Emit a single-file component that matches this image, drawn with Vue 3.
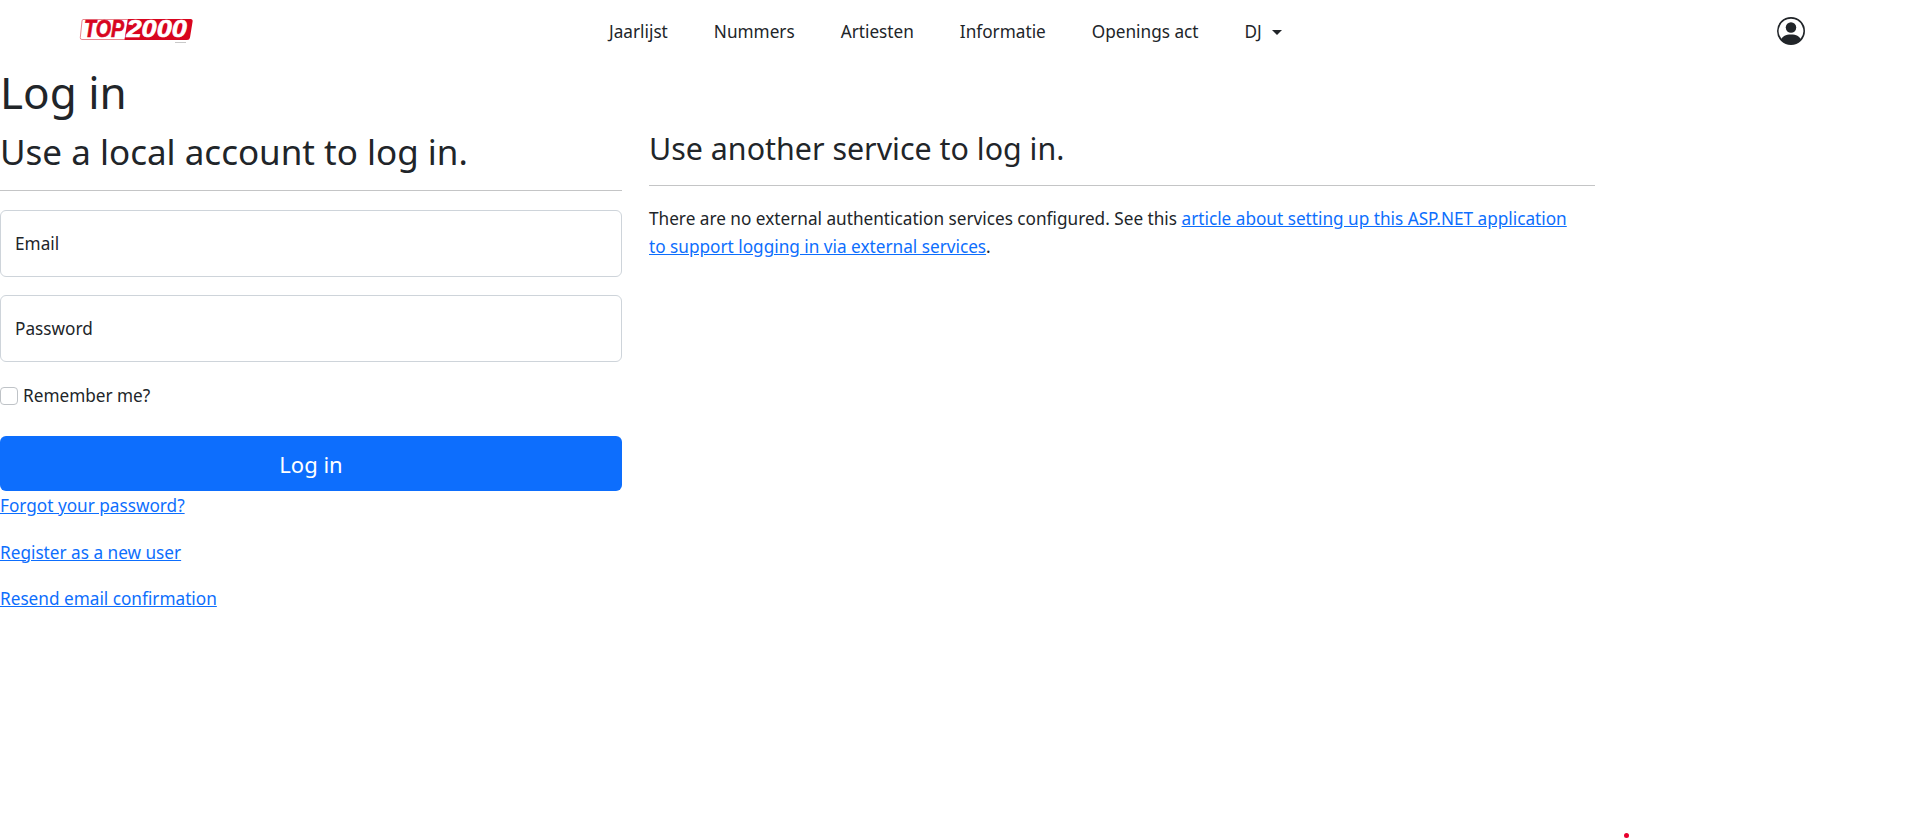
<script setup>
const links = ['Jaarlijst', 'Nummers', 'Artiesten', 'Informatie', 'Openings act']
</script>

<template>
  <div class="page">
    <header class="navbar">
      <a class="logo" href="#" aria-label="Top 2000">
        <svg width="114" height="31" viewBox="0 -3 114 31">
          <path d="M4 1.500H49L46 21.500H3Q1 21.500 1.300 19.500L3 3Q3.200 1.500 4 1.500Z" fill="#fff" stroke="#e9858f" stroke-width="1"/>
          <path d="M49 1H111.500Q114 1 113.600 3.500L111 19.500Q110.600 22 108 22H45.500Z" fill="#d8051f"/>
          <text x="5" y="19" class="logo-top" textLength="40" lengthAdjust="spacingAndGlyphs">TOP</text>
          <text x="47.500" y="19" class="logo-num" textLength="60.500" lengthAdjust="spacingAndGlyphs">2000</text>
          <rect x="96" y="24" width="11" height="1" fill="#c9c9c9"/>
        </svg>
      </a>
      <nav class="nav">
        <a v-for="l in links" :key="l" href="#" class="nav-link">{{ l }}</a>
        <a href="#" class="nav-link dropdown">DJ<span class="caret"></span></a>
      </nav>
      <svg class="user" width="28" height="28" viewBox="0 0 16 16" fill="#212529">
        <path d="M11 6a3 3 0 1 1-6 0 3 3 0 0 1 6 0"/>
        <path fill-rule="evenodd" d="M0 8a8 8 0 1 1 16 0A8 8 0 0 1 0 8m8-7a7 7 0 0 0-5.468 11.370C3.242 11.226 4.805 10 8 10s4.757 1.225 5.468 2.370A7 7 0 0 0 8 1"/>
      </svg>
    </header>

    <main class="main">
      <h1>Log in</h1>
      <div class="columns">
        <section class="left">
          <h2>Use a local account to log in.</h2>
          <hr class="rule-left" />
          <div class="field">Email</div>
          <div class="field">Password</div>
          <label class="remember"><span class="check"></span>Remember me?</label>
          <button class="btn" type="button">Log in</button>
          <p class="forgot"><a href="#">Forgot your password?</a></p>
          <p><a href="#">Register as a new user</a></p>
          <p><a href="#">Resend email confirmation</a></p>
        </section>
        <section class="right">
          <h3>Use another service to log in.</h3>
          <hr class="rule-right" />
          <p class="info">There are no external authentication services configured. See this <a href="#">article about setting up this ASP.NET application to support logging in via external services</a>.</p>
        </section>
      </div>
    </main>
    <span class="dot"></span>
  </div>
</template>

<style>
html, body { margin: 0; background: #fff; }
</style>

<style scoped>
.page {
  position: relative;
  height: 839px;
  overflow: hidden;
  font-family: "Noto Sans", "Open Sans", sans-serif;
  font-size: 17.200px;
  line-height: 24px;
  color: #212529;
}
.navbar {
  display: flex;
  align-items: center;
  height: 62px;
  padding-left: 79px;
  box-sizing: border-box;
}
.logo { display: block; width: 114px; height: 31px; margin-top: -2px; }
.logo-top, .logo-num {
  font-family: "Liberation Sans", sans-serif;
  font-weight: 700;
  font-style: italic;
  font-size: 23px;
  stroke-width: 0.6px;
}
.logo-top { fill: #d8051f; stroke: #d8051f; }
.logo-num { fill: #fff; stroke: #fff; }
.nav { display: flex; margin-left: 393px; margin-top: 2px; }
.nav-link {
  color: #212529;
  text-decoration: none;
  padding: 0 23px;
}
.caret {
  display: inline-block;
  margin-left: 10px;
  vertical-align: 3px;
  border-top: 5.500px solid #212529;
  border-left: 5.500px solid transparent;
  border-right: 5.500px solid transparent;
}
.user { margin-left: auto; margin-right: 101px; }
h1 { margin: 0; font-size: 44px; font-weight: 400; line-height: 60px; height: 48px; }
h2 { margin: 0; font-size: 35px; font-weight: 400; line-height: 41px; }
h3 { margin: 0; font-size: 30.400px; font-weight: 400; line-height: 34px; }
.columns {
  display: grid;
  grid-template-columns: 622px 946px;
  column-gap: 27px;
  margin-top: 21px;
}
hr { border: 0; border-top: 1px solid #c4c5c6; margin: 16px 0; }
.rule-left { margin: 18px 0 19px; }
.field {
  box-sizing: border-box;
  height: 67px;
  border: 1px solid #ced4da;
  border-radius: 6px;
  padding: 21px 14px;
  margin-bottom: 18px;
}
.remember { display: flex; align-items: center; height: 24px; margin-top: 22px; margin-bottom: 28px; }
.check {
  box-sizing: border-box;
  width: 18px;
  height: 18px;
  border: 1px solid #bfc3c7;
  border-radius: 4px;
  margin-right: 5px;
}
.btn {
  display: block;
  width: 100%;
  height: 55px;
  border: 0;
  border-radius: 6px;
  background: #0d6efd;
  color: #fff;
  font: inherit;
  font-size: 22px;
}
p { margin: 0 0 22.500px; }
.forgot { margin-top: 3px; }
a { color: #0d6efd; }
.right h3 { margin-top: 1px; }
.right hr { margin: 19px 0 19px; }
.info { line-height: 28px; max-width: 932px; }
.dot {
  position: absolute;
  left: 1624px;
  top: 833px;
  width: 5px;
  height: 5px;
  border-radius: 50%;
  background: #e8002d;
}
</style>
